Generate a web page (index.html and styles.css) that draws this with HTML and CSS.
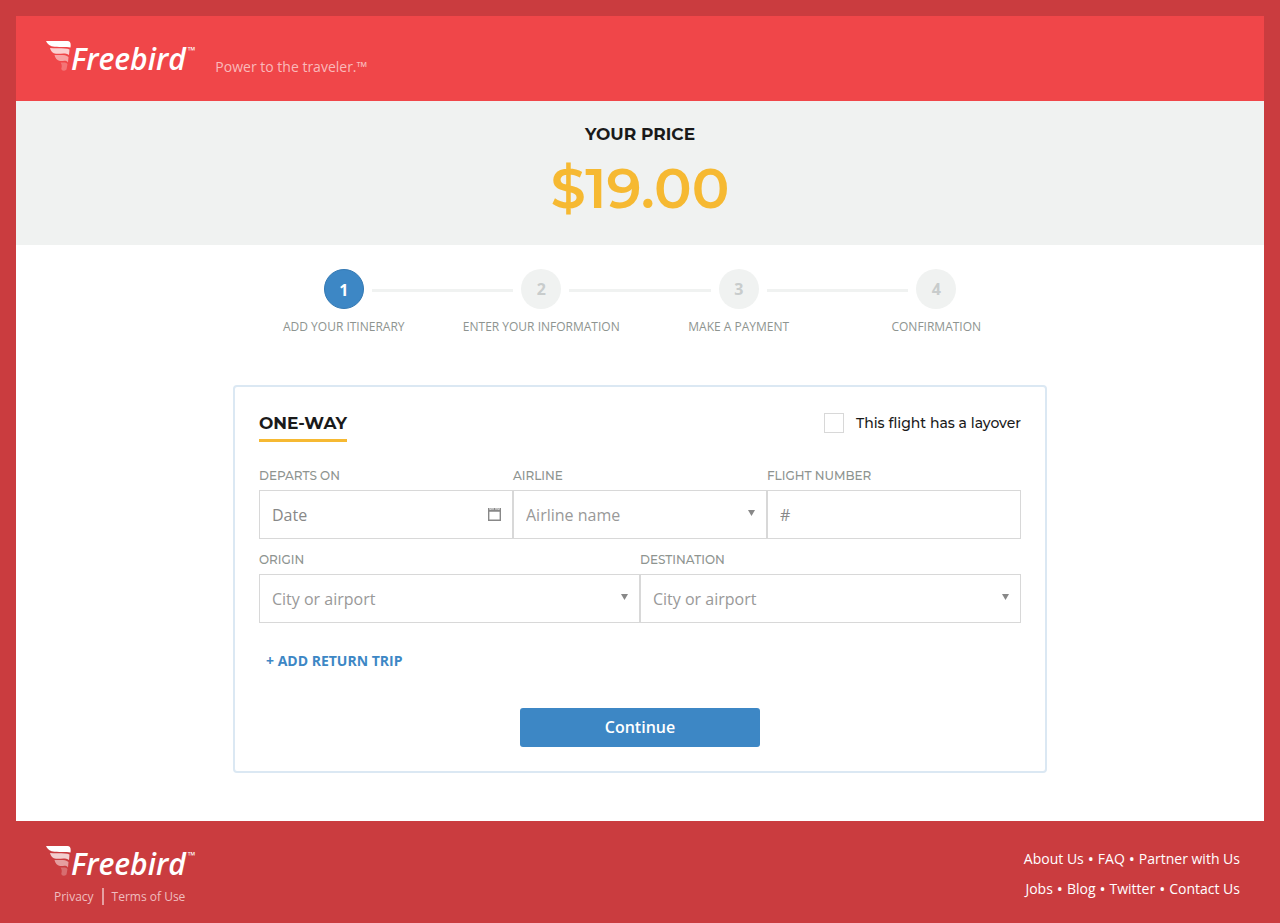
FILE: index.html
```html
<!DOCTYPE html>
<html lang="en">
<head>
<meta charset="utf-8">
<meta name="viewport" content="width=device-width, initial-scale=1">
<title>Freebird</title>
<link rel="stylesheet" href="styles.css">
</head>
<body>
<svg class="defs" aria-hidden="true">
  <symbol id="wing" viewBox="0 0 25 30">
    <path d="M0 0H21.500Q25.500 0 24.500 6.500C20 5.500 14 6.200 8.500 5.800Q2 5.200 0 0Z"/>
    <path opacity=".75" d="M4 7C10 7.600 20 6.500 23.500 8.500L23 14C19 11.500 15 13.200 10 12.800Q5 12 4 7Z"/>
    <path opacity=".5" d="M8.500 14C13 14.500 19 13 22.500 16L22 21.500C19.500 18.500 17 20.500 14 20Q9.500 19 8.500 14Z"/>
    <path opacity=".25" d="M14.500 21.500C18 21.500 20 21 21.500 23L20.500 28.500C18.500 30.500 15.500 30 15.300 27.500C16 25.500 16 23.500 14.500 21.500Z"/>
  </symbol>
</svg>
<div class="page">
  <header class="header">
    <a class="logo" href="#" aria-label="Freebird"><svg class="wing"><use href="#wing"/></svg><span class="logo-name">Freebird</span><span class="logo-tm">™</span></a>
    <p class="tagline">Power to the traveler.™</p>
  </header>
  <section class="price">
    <h1 class="price-title">YOUR PRICE</h1>
    <p class="price-value">$19.00</p>
  </section>
  <main class="main">
    <ol class="steps">
      <li class="step step-active"><span class="step-number">1</span><span class="step-label">ADD YOUR ITINERARY</span></li>
      <li class="step"><span class="step-number">2</span><span class="step-label">ENTER YOUR INFORMATION</span></li>
      <li class="step"><span class="step-number">3</span><span class="step-label">MAKE A PAYMENT</span></li>
      <li class="step"><span class="step-number">4</span><span class="step-label">CONFIRMATION</span></li>
    </ol>
    <form class="card">
      <div class="card-head">
        <h2 class="card-title">ONE-WAY</h2>
        <label class="layover"><input class="layover-box" type="checkbox">This flight has a layover</label>
      </div>
      <div class="row">
        <div class="field">
          <label class="field-label" for="date">DEPARTS ON</label>
          <div class="control">
            <input class="input" id="date" type="text" placeholder="Date">
            <svg class="icon calendar" viewBox="0 0 13 13"><path fill="none" stroke="#888" stroke-width="1.400" d="M.7 3V12.300H12.300V3"/><path fill="#888" d="M0 0H1.500V1.800H3.500V0H4.500V1.800H5.500V0H7.500V1.800H8.500V0H9.500V1.800H11.500V0H13V3.800H0ZM2.200 0H2.800V1.200H2.200ZM10.200 0H10.800V1.200H10.200Z"/></svg>
          </div>
        </div>
        <div class="field">
          <label class="field-label" for="airline">AIRLINE</label>
          <div class="control">
            <select class="input select" id="airline"><option>Airline name</option></select>
            <svg class="icon arrow" viewBox="0 0 7 6"><path d="M0 0H7L3.500 6Z"/></svg>
          </div>
        </div>
        <div class="field">
          <label class="field-label" for="flight">FLIGHT NUMBER</label>
          <div class="control"><input class="input" id="flight" type="text" placeholder="#"></div>
        </div>
      </div>
      <div class="row">
        <div class="field">
          <label class="field-label" for="origin">ORIGIN</label>
          <div class="control">
            <select class="input select" id="origin"><option>City or airport</option></select>
            <svg class="icon arrow" viewBox="0 0 7 6"><path d="M0 0H7L3.500 6Z"/></svg>
          </div>
        </div>
        <div class="field">
          <label class="field-label" for="destination">DESTINATION</label>
          <div class="control">
            <select class="input select" id="destination"><option>City or airport</option></select>
            <svg class="icon arrow" viewBox="0 0 7 6"><path d="M0 0H7L3.500 6Z"/></svg>
          </div>
        </div>
      </div>
      <button class="add-trip" type="button">+ ADD RETURN TRIP</button>
      <button class="continue" type="button">Continue</button>
    </form>
  </main>
</div>
<footer class="footer">
  <div class="footer-brand">
    <a class="logo" href="#" aria-label="Freebird"><svg class="wing"><use href="#wing"/></svg><span class="logo-name">Freebird</span><span class="logo-tm">™</span></a>
    <nav class="legal"><a class="legal-link" href="#">Privacy</a><a class="legal-link" href="#">Terms of Use</a></nav>
  </div>
  <nav class="footer-nav">
    <div class="footer-row"><a href="#">About Us</a><span>•</span><a href="#">FAQ</a><span>•</span><a href="#">Partner with Us</a></div>
    <div class="footer-row"><a href="#">Jobs</a><span>•</span><a href="#">Blog</a><span>•</span><a href="#">Twitter</a><span>•</span><a href="#">Contact Us</a></div>
  </nav>
</footer>
</body>
</html>
```
FILE: styles.css
```css
* { box-sizing: border-box; }
body {
  margin: 0;
  padding: 16px 16px 0;
  background: #ca3c3f;
  font-family: "Open Sans", sans-serif;
  color: #1a1a1a;
}
h1, h2, p, ol { margin: 0; padding: 0; }
a { color: inherit; text-decoration: none; }
.defs { display: none; }
.page { background: #fff; }

.header {
  display: flex;
  align-items: flex-start;
  gap: 20px;
  padding: 24px 30px 21px;
  background: #f04649;
}
.logo { display: flex; align-items: flex-start; color: #fff; height: 40px; }
.wing { width: 25px; height: 30px; margin-top: 1px; fill: #fff; }
.logo-name {
  font: italic 600 30px/38px "Open Sans", sans-serif;
}
.logo-tm { margin-left: 2px; font-size: 10px; line-height: 20px; }
.tagline { padding-top: 17px; font-size: 14px; line-height: 20px; color: #fab9ba; }

.price {
  padding: 19px 16px 17px;
  background: #f0f2f1;
  text-align: center;
  font-family: Montserrat, sans-serif;
}
.price-title { font-size: 17px; line-height: 28px; font-weight: 700; }
.price-value { font-size: 56px; line-height: 80px; font-weight: 600; color: #f6b932; }

.main { padding: 24px 16px 48px; }
.steps {
  display: grid;
  grid-template-columns: repeat(4, 1fr);
  max-width: 790px;
  margin: 0 auto;
  list-style: none;
}
.step {
  display: grid;
  grid-template-columns: 1fr 40px 1fr;
  column-gap: 8px;
  align-items: center;
}
.step::before, .step::after { content: ""; height: 3px; margin-top: 2px; background: #f0f2f1; }
.step::before { grid-column: 1; grid-row: 1; }
.step::after { grid-column: 3; grid-row: 1; }
.step:first-child::before, .step:last-child::after { visibility: hidden; }
.step-number {
  grid-column: 2;
  grid-row: 1;
  height: 40px;
  border-radius: 50%;
  background: #f0f2f1;
  color: #c8cccc;
  font-size: 16px;
  line-height: 40px;
  font-weight: 700;
  text-align: center;
}
.step-active .step-number { background: #3d87c5; border: 1px solid #3479b3; color: #fff; }
.step-label {
  grid-column: 1 / -1;
  padding-top: 8px;
  font-size: 12px;
  line-height: 20px;
  font-weight: 500;
  color: #8e9490;
  text-align: center;
}

.card {
  display: flex;
  flex-direction: column;
  max-width: 814px;
  margin: 48px auto 0;
  padding: 24px;
  border: 2px solid #dbe8f3;
  border-radius: 4px;
}
.card-head { display: flex; justify-content: space-between; align-items: flex-start; margin-bottom: 24px; }
.card-title {
  padding-bottom: 4px;
  border-bottom: 3px solid #f6b932;
  font: 700 17px/24px Montserrat, sans-serif;
}
.layover {
  display: flex;
  align-items: center;
  gap: 12px;
  font: 500 14px/24px Montserrat, sans-serif;
}
.layover-box { appearance: none; width: 20px; height: 20px; margin: 0; border: 1px solid #d8d8d8; background: #fff; }
.row { display: flex; margin-bottom: 11px; }
.field { flex: 1; min-width: 0; }
.field-label { display: block; margin-bottom: 5px; font: 500 12px/19px Montserrat, sans-serif; color: #8e9490; }
.control { display: grid; align-items: center; }
.input {
  grid-area: 1 / 1;
  width: 100%;
  height: 49px;
  padding: 0 12px;
  border: 1px solid #d8d8d8;
  border-radius: 0;
  background: #fff;
  color: #999;
  font: 16px "Open Sans", sans-serif;
}
.input::placeholder { color: #888; opacity: 1; }
.select { appearance: none; }
.icon { grid-area: 1 / 1; justify-self: end; margin-right: 12px; pointer-events: none; }
.calendar { width: 13px; height: 13px; }
.arrow { width: 7px; height: 6px; margin-bottom: 3px; fill: #888; }
.add-trip {
  align-self: flex-start;
  margin-top: 17px;
  padding: 0 7px;
  border: 0;
  background: none;
  color: #3d87c5;
  font: 700 14px/20px "Open Sans", sans-serif;
}
.continue {
  align-self: center;
  width: 240px;
  max-width: 100%;
  margin-top: 37px;
  padding: 0;
  border: 0;
  border-radius: 3px;
  background: #3d87c5;
  color: #fff;
  font: 600 16px/39px "Open Sans", sans-serif;
}

.footer { display: flex; justify-content: space-between; padding: 23px 24px 14px 30px; }
.footer-brand { padding-top: 1px; }
.legal { display: flex; padding-left: 8px; margin-top: 3px; font-size: 12px; line-height: 17px; color: #efbebf; }
.legal-link + .legal-link { margin-left: 8px; padding-left: 8px; border-left: 2px solid #e5a0a2; }
.footer-nav { font-size: 14px; line-height: 30px; color: #fff; }
.footer-row { display: flex; justify-content: flex-end; gap: 4px; }
.footer-row span { font-size: 16px; }
```
